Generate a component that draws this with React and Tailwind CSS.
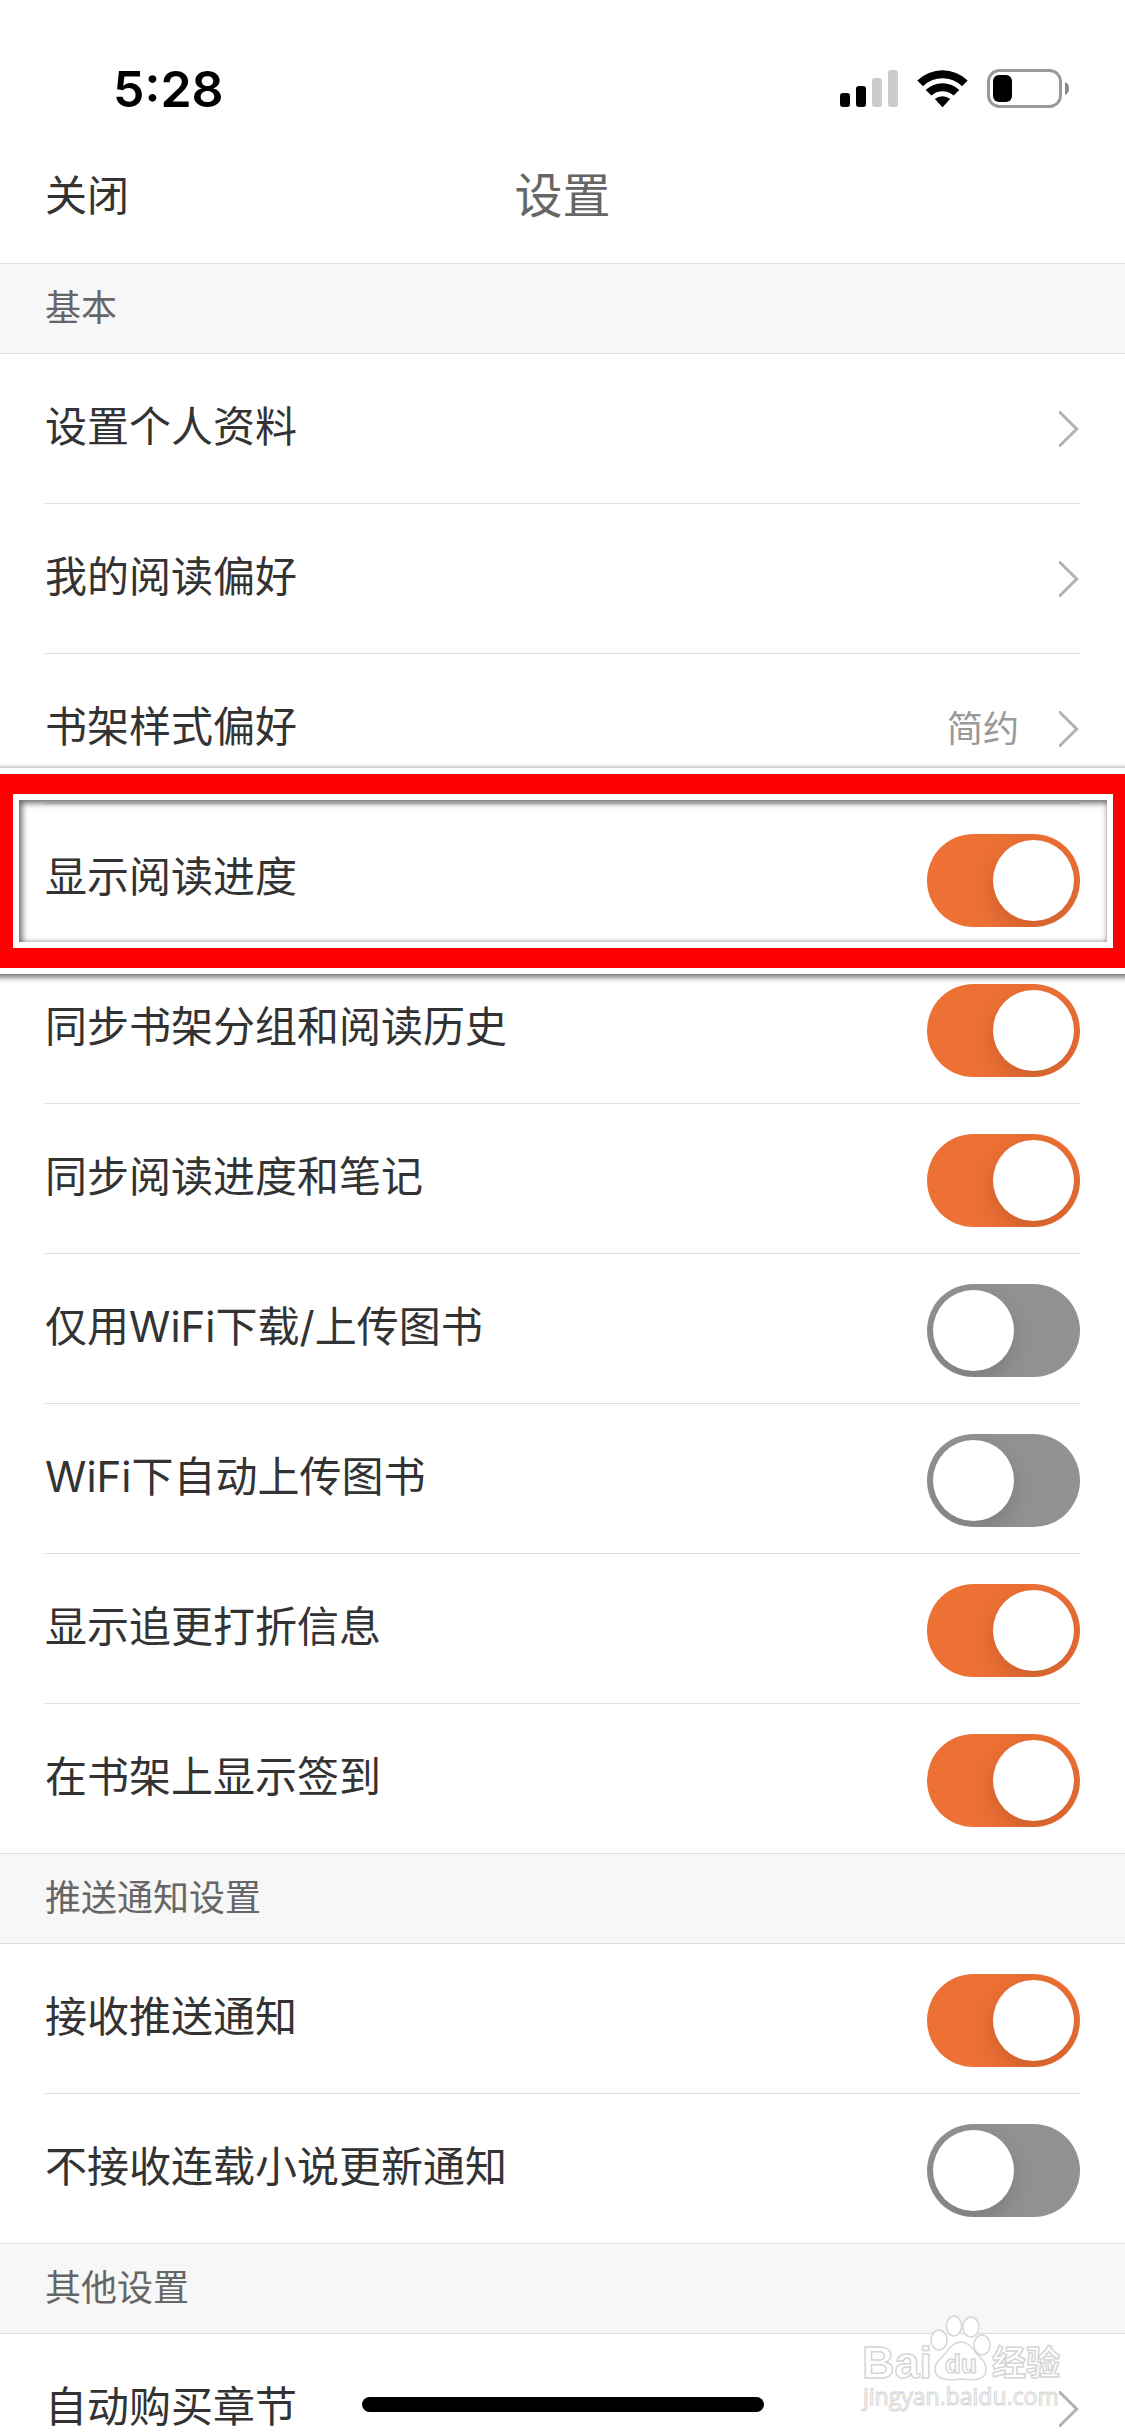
import React, { useState } from "react";

const basicItems = [
  { id: "profile", label: "设置个人资料", type: "link" },
  { id: "preference", label: "我的阅读偏好", type: "link" },
  { id: "shelfStyle", label: "书架样式偏好", type: "link", value: "简约" },
  { id: "showProgress", label: "显示阅读进度", type: "switch", highlight: true },
  { id: "syncShelf", label: "同步书架分组和阅读历史", type: "switch" },
  { id: "syncNotes", label: "同步阅读进度和笔记", type: "switch" },
  { id: "wifiOnly", label: "仅用WiFi下载/上传图书", type: "switch" },
  { id: "wifiUpload", label: "WiFi下自动上传图书", type: "switch" },
  { id: "showDiscount", label: "显示追更打折信息", type: "switch" },
  { id: "showCheckin", label: "在书架上显示签到", type: "switch" },
];

const pushItems = [
  { id: "receivePush", label: "接收推送通知", type: "switch" },
  { id: "muteSerial", label: "不接收连载小说更新通知", type: "switch" },
];

const otherItems = [{ id: "autoBuy", label: "自动购买章节", type: "link" }];

const defaults = {
  showProgress: true,
  syncShelf: true,
  syncNotes: true,
  wifiOnly: false,
  wifiUpload: false,
  showDiscount: true,
  showCheckin: true,
  receivePush: true,
  muteSerial: false,
};

const StatusBar = () => (
  <div className="flex h-[150px] shrink-0 items-center justify-between pt-7 pr-14 pl-[113px]">
    <span className="text-[50px] leading-[60px] font-semibold text-black">
      5:28
    </span>
    <div className="flex items-center gap-[19px]">
      <svg width="58" height="38" viewBox="0 0 58 38" aria-hidden="true">
        <rect x="0" y="23" width="10" height="14" rx="3" fill="#000" />
        <rect x="16" y="16" width="10" height="21" rx="3" fill="#000" />
        <rect x="32" y="8" width="10" height="29" rx="3" fill="#ccc" />
        <rect x="48" y="0" width="10" height="37" rx="3" fill="#ccc" />
      </svg>
      <svg width="51" height="38" viewBox="0 0 51 38" aria-hidden="true">
        <path d="M0.3 10.400A36.500 36.500 0 0 1 50.700 10.400L45 16.200A28 28 0 0 0 6 16.200Z" />
        <path d="M8.700 20A24 24 0 0 1 42.300 20L36.600 25.500A16.500 16.500 0 0 0 14.400 25.500Z" />
        <path d="M17.800 29A12 12 0 0 1 33.200 29L25.500 37.300Z" />
      </svg>
      <svg width="82" height="40" viewBox="0 0 82 40" aria-hidden="true">
        <rect x="1.5" y="1.5" width="72" height="36" rx="11" fill="none" stroke="#999" strokeWidth="3" />
        <rect x="6" y="6" width="19" height="27" rx="6" fill="#000" />
        <path d="M78 13v13c2.600-1 4-3.500 4-6.500s-1.400-5.500-4-6.500z" fill="#888" />
      </svg>
    </div>
  </div>
);

const Chevron = () => (
  <svg className="mr-px h-9 w-5 shrink-0" viewBox="0 0 20 36" fill="none" aria-hidden="true">
    <path d="M0 0.500L17.700 18L0 35.500" stroke="#b2b2b2" strokeWidth="3" />
  </svg>
);

const SectionTitle = ({ children }) => (
  <h2 className="border-y border-[#dedede] bg-[#f7f7f7] px-[45px] pt-[18px] pb-[19px] text-[36px] leading-[52px] text-[#666]">
    {children}
  </h2>
);

const Row = ({ item, checked, onToggle }) => (
  <li className="relative px-[45px] [&:last-child>*]:border-b-0">
    {item.type === "switch" ? (
      <label className="flex items-center justify-between border-b border-[#dedede] pt-[30px] pb-[26px]">
        <span className="-mt-2 leading-[60px]">{item.label}</span>
        <input
          type="checkbox"
          role="switch"
          checked={checked}
          onChange={() => onToggle(item.id)}
          className="flex h-[93px] w-[153px] shrink-0 appearance-none items-center justify-start overflow-hidden rounded-full bg-[#929294] px-1.5 before:size-[81px] before:rounded-full before:bg-white before:shadow-[0_9px_24px_rgba(0,0,0,0.15)] before:content-[''] checked:justify-end checked:bg-[#ed7034]"
        />
      </label>
    ) : (
      <button
        type="button"
        className="flex w-full items-center border-b border-[#dedede] py-7"
      >
        <span className="flex h-[93px] flex-1 items-center pb-1 text-left leading-[60px]">
          {item.label}
        </span>
        {item.value && (
          <span className="mr-10 text-[36px] leading-[52px] text-[#999]">
            {item.value}
          </span>
        )}
        <Chevron />
      </button>
    )}
    {/* red frame around the row */}
    {item.highlight && (
      <div className="pointer-events-none absolute -top-[30px] -right-2 -bottom-[14px] -left-[7px] z-10 border-[20px] border-[#ff0000] shadow-[0_0_0_6px_#fff,2px_2px_6px_7px_rgba(0,0,0,0.6),inset_0_0_0_6px_#fff,inset_2px_2px_6px_7px_rgba(0,0,0,0.6)]" />
    )}
  </li>
);

const Watermark = () => (
  <div className="pointer-events-none absolute right-[60px] bottom-[22px] z-20" aria-hidden="true">
    <svg width="204" height="102" viewBox="0 0 204 102" fill="#fff" stroke="#d6d6d6" strokeWidth="1.500">
      <ellipse cx="78" cy="28" rx="8" ry="10" />
      <ellipse cx="93" cy="14" rx="7.500" ry="10" />
      <ellipse cx="110" cy="15" rx="8" ry="10" />
      <ellipse cx="121" cy="33" rx="8" ry="10" />
      <path d="M100 30c9 0 12 8 17 13s9 9 8 16c-1 8-9 10-25 8c-16 2-24 0-26-8c-1-7 4-11 9-16s8-13 17-13z" />
      <g className="font-['Liberation_Sans',sans-serif] font-bold">
        <text x="1" y="66" fontSize="45">Bai</text>
        <text x="84" y="61" fontSize="26">du</text>
      </g>
      <text x="131" y="63" fontSize="34" className="font-['Noto_Sans_CJK_SC',sans-serif] font-bold">经验</text>
      <text x="2" y="93" fontSize="23" strokeWidth="1" className="font-['Open_Sans',sans-serif]">jingyan.baidu.com</text>
    </svg>
  </div>
);

export default function App() {
  const [settings, setSettings] = useState(defaults);

  const handleToggle = (id) =>
    setSettings((prev) => ({ ...prev, [id]: !prev[id] }));

  const renderItems = (items) => (
    <ul>
      {items.map((item) => (
        <Row
          key={item.id}
          item={item}
          checked={settings[item.id]}
          onToggle={handleToggle}
        />
      ))}
    </ul>
  );

  return (
    <div className="relative flex h-screen flex-col overflow-hidden bg-white font-['Inter','Noto_Sans_CJK_SC',sans-serif] text-[42px] text-[#333]">
      <StatusBar />

      {/* ================= HEADER ================= */}
      <header className="grid h-[113px] shrink-0 grid-cols-3 items-start px-[45px] pt-3">
        <button type="button" className="justify-self-start leading-[68px]">
          关闭
        </button>
        <h1 className="text-center text-[48px] leading-[68px] text-[#666]">设置</h1>
      </header>

      {/* ================= SETTINGS ================= */}
      <main className="flex-1 overflow-x-hidden overflow-y-auto [scrollbar-width:none]">
        <SectionTitle>基本</SectionTitle>
        {renderItems(basicItems)}
        <SectionTitle>推送通知设置</SectionTitle>
        {renderItems(pushItems)}
        <SectionTitle>其他设置</SectionTitle>
        {renderItems(otherItems)}
      </main>

      <Watermark />
      <div className="absolute bottom-6 left-1/2 z-20 h-[15px] w-[402px] -translate-x-1/2 rounded-full bg-black" />
    </div>
  );
}
